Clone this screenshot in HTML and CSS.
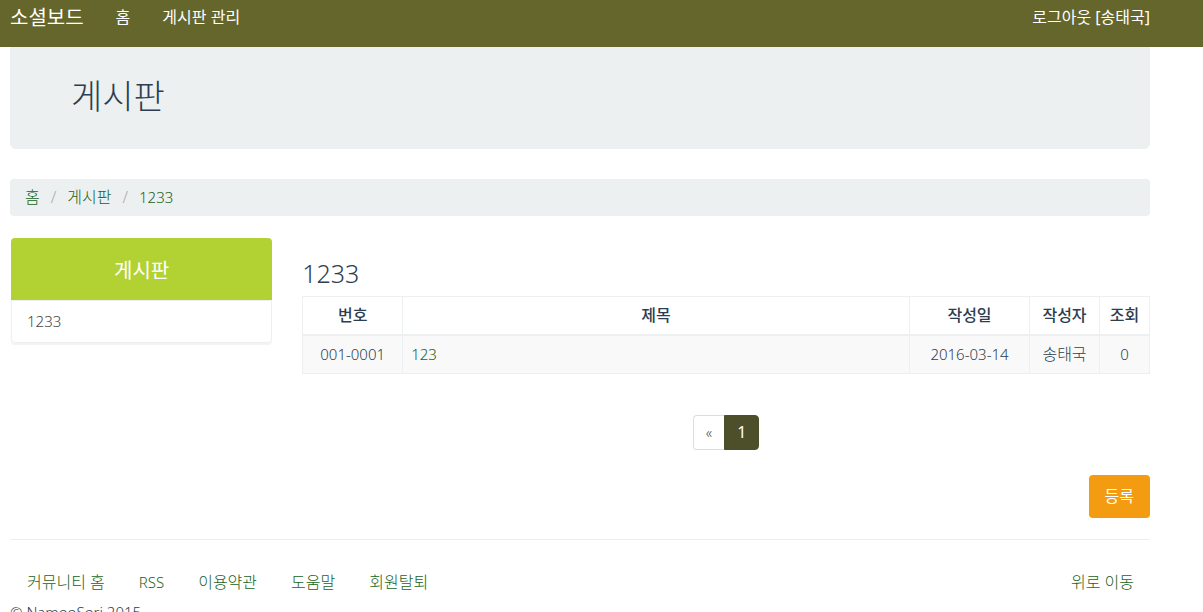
FILE: index.html
```html
<!DOCTYPE html>
<html lang="ko">
<head>
<meta charset="utf-8">
<meta name="viewport" content="width=device-width, initial-scale=1">
<title>게시판 - 소셜보드</title>
<link rel="stylesheet" href="styles.css">
</head>
<body>
<header class="navbar" id="top">
  <a class="brand" href="#">소셜보드</a>
  <nav class="nav-links">
    <a href="#">홈</a>
    <a href="#">게시판 관리</a>
  </nav>
  <a class="logout" href="#">로그아웃 [송태국]</a>
</header>
<div class="container">
  <div class="jumbotron"><h1>게시판</h1></div>
  <nav aria-label="breadcrumb">
    <ol class="breadcrumb">
      <li><a href="#">홈</a></li>
      <li><a href="#">게시판</a></li>
      <li><a class="latin" href="#">1233</a></li>
    </ol>
  </nav>
  <div class="columns">
    <aside class="board-menu">
      <h2>게시판</h2>
      <a class="latin" href="#">1233</a>
    </aside>
    <main>
      <h3>1233</h3>
      <table>
        <colgroup><col class="col-no"><col><col class="col-date"><col class="col-author"><col class="col-hits"></colgroup>
        <thead>
          <tr><th>번호</th><th>제목</th><th>작성일</th><th>작성자</th><th>조회</th></tr>
        </thead>
        <tbody>
          <tr><td class="latin">001-0001</td><td class="subject latin"><a href="#">123</a></td><td class="latin">2016-03-14</td><td>송태국</td><td class="latin">0</td></tr>
        </tbody>
      </table>
      <nav class="pagination" aria-label="pagination">
        <a class="prev" href="#">«</a>
        <a class="current" href="#" aria-current="page">1</a>
      </nav>
      <div class="actions"><button type="button">등록</button></div>
    </main>
  </div>
  <footer>
    <nav class="footer-links">
      <a href="#">커뮤니티 홈</a>
      <a class="latin" href="#">RSS</a>
      <a href="#">이용약관</a>
      <a href="#">도움말</a>
      <a href="#">회원탈퇴</a>
      <a class="to-top" href="#top">위로 이동</a>
    </nav>
    <p class="latin">© NamooSori 2015</p>
  </footer>
</div>
</body>
</html>
```

FILE: styles.css
```css
* { box-sizing: border-box; }
html { overflow: hidden; }
body {
  margin: 0;
  background: #fff;
  color: #2c3e50;
  font: 300 16px/21px "Noto Sans", "Noto Sans CJK KR", sans-serif;
}
a { color: #186318; text-decoration: none; }
h1, h2, h3, p { margin: 0; font-weight: 300; }
.latin { font-size: 15px; }

.navbar {
  display: flex;
  align-items: flex-start;
  height: 47px;
  padding: 7px 53px 0 10px;
  background: #65662c;
}
.navbar a { color: #fff; font-weight: 400; }
.navbar .brand { font-size: 20px; }
.nav-links { display: flex; gap: 32px; margin-left: 32px; }
.logout { margin-left: auto; }

.container { padding: 0 53px 0 10px; }
.jumbotron {
  padding: 30px 61px 34px;
  border-radius: 0 0 6px 6px;
  background: #ecf0f1;
}
.jumbotron h1 { font-size: 34px; line-height: 38px; }

.breadcrumb {
  display: flex;
  margin: 30px 0 22px;
  padding: 8px 15px;
  border-radius: 4px;
  background: #ecf0f1;
  list-style: none;
}
.breadcrumb li + li::before { content: "/"; padding: 0 11px; color: #aaa; }

.columns { display: flex; gap: 30px; }
.board-menu {
  flex: 0 0 calc(23% - 1px);
  align-self: flex-start;
  margin-left: 1px;
  border-radius: 4px;
  box-shadow: 0 2px 1px rgba(0, 0, 0, 0.05);
}
.board-menu h2 {
  padding: 22px 15px 18px;
  border-radius: 4px 4px 0 0;
  background: #b2d234;
  color: #fff;
  font-size: 20px;
  font-weight: 400;
  line-height: 22px;
  text-align: center;
}
.board-menu a {
  display: block;
  padding: 10px 15px;
  border: 1px solid #ecf0f1;
  border-radius: 0 0 4px 4px;
  color: #444;
}
main { flex: 1; min-width: 0; }
main h3 { padding: 21px 0 9px; font-size: 25px; line-height: 28px; }

table { width: 100%; table-layout: fixed; border-collapse: collapse; }
th, td { padding: 8px; border: 1px solid #ecf0f1; text-align: center; }
th { border-bottom-width: 2px; font-weight: 500; }
tbody tr { background: #f9f9f9; }
td.subject { text-align: left; }
.col-no { width: 100px; }
.col-date { width: 120px; }
.col-author { width: 70px; }
.col-hits { width: 50px; }

.pagination { display: flex; justify-content: center; margin: 41px 0 25px; }
.pagination a { padding: 6px 12px; border: 1px solid #ddd; }
.pagination .prev {
  border-right: 0;
  border-radius: 4px 0 0 4px;
  color: #444;
  font-size: 14px;
}
.pagination .current {
  border-color: #4d4f2b;
  border-radius: 0 4px 4px 0;
  background: #4d4f2b;
  color: #fff;
  font-weight: 400;
}
.actions { display: flex; justify-content: flex-end; }
.actions button {
  padding: 11px 16px;
  border: 0;
  border-radius: 4px;
  background: #f39c12;
  color: #fff;
  font: inherit;
  font-weight: 400;
}

footer { margin-top: 21px; border-top: 1px solid #eee; }
.footer-links { display: flex; gap: 34px; padding: 32px 16px 9px 17px; }
.to-top { margin-left: auto; }
```
